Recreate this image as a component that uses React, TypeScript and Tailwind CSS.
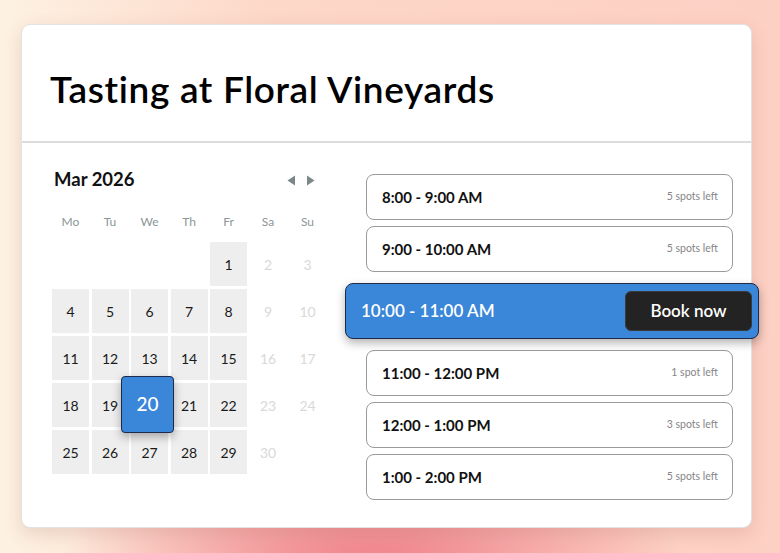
import React from "react";

type Slot = { time: string; spots: string };

const slots: Slot[] = [
  { time: "8:00 - 9:00 AM", spots: "5 spots left" },
  { time: "9:00 - 10:00 AM", spots: "5 spots left" },
  { time: "10:00 - 11:00 AM", spots: "" },
  { time: "11:00 - 12:00 PM", spots: "1 spot left" },
  { time: "12:00 - 1:00 PM", spots: "3 spots left" },
  { time: "1:00 - 2:00 PM", spots: "5 spots left" },
];

const weekdays = ["Mo", "Tu", "We", "Th", "Fr", "Sa", "Su"];

// March 2026 grid, starting on Friday the 1st (as the picture shows)
const days: (number | null)[] = [null, null, null, null, ...Array.from({ length: 30 }, (_, i) => i + 1)];

const Calendar = () => (
  <div className="w-[274px] shrink-0">
    <div className="flex h-[24px] items-center justify-between pl-[2px] pr-[11px]">
      <span className="text-[18.5px] font-bold text-[#111]">Mar 2026</span>
      <div className="flex items-center gap-[10px] text-[#7c8888]">
        <svg width="9" height="11" viewBox="0 0 9 11"><path d="M8 0.5 L0.5 5.5 L8 10.5 Z" fill="currentColor" /></svg>
        <svg width="9" height="11" viewBox="0 0 9 11"><path d="M1 0.5 L8.5 5.5 L1 10.5 Z" fill="currentColor" /></svg>
      </div>
    </div>
    <div className="mt-[21px] grid grid-cols-7 gap-x-[2.5px] text-center text-[12px] text-[#8c9696]">
      {weekdays.map((d) => (
        <span key={d}>{d}</span>
      ))}
    </div>
    <div className="mt-[11px] grid grid-cols-7 gap-x-[2.5px] gap-y-[3px]">
      {days.map((d, i) => {
        if (d === null) return <div key={i} className="h-[44px]" />;
        const weekend = i % 7 >= 5;
        if (weekend)
          return (
            <div key={i} className="flex h-[44px] items-center justify-center text-[14px] text-[#d9d9d9]">
              {d}
            </div>
          );
        if (d === 20)
          return (
            <div key={i} className="relative h-[44px] bg-[#eeeeee]">
              <div className="absolute -bottom-[6px] -left-[10px] -right-[6px] -top-[7px] z-10 flex items-center justify-center rounded-[4px] border border-[#1d2a4a] bg-[#3a86d8] text-[19px] font-medium text-white shadow-[0_4px_10px_rgba(0,0,0,0.3)]">
                20
              </div>
            </div>
          );
        return (
          <div key={i} className="flex h-[44px] items-center justify-center bg-[#eeeeee] text-[14px] text-[#1a1a1a]">
            {d}
          </div>
        );
      })}
    </div>
  </div>
);

const SlotRow = ({ slot }: { slot: Slot }) => (
  <div className="flex h-[46px] items-center justify-between rounded-[8px] border-[1.5px] border-[#9a9a9a] bg-white pl-[15px] pr-[14px]">
    <span className="text-[15px] font-bold text-[#111]">{slot.time}</span>
    <span className="text-[10.5px] text-[#858585]">{slot.spots}</span>
  </div>
);

export default function App() {
  return (
    <div
      className="min-h-[553px] w-full pt-[24px] pl-[21px] [font-family:Lato,'Noto_Sans',sans-serif] bg-[radial-gradient(ellipse_40%_32%_at_48%_105%,#ee7a85_0%,rgba(240,130,140,0.6)_45%,rgba(253,208,196,0)_100%),linear-gradient(90deg,#fdf2e2_0%,#fdd7c8_35%,#fdd0c4_100%)]"
    >
      <div className="w-[731px] h-[504px] rounded-[9px] border border-[#e2e2e2] bg-white shadow-[0_6px_18px_rgba(150,80,70,0.18)]">
        <div className="flex h-[118px] items-center border-b-2 border-[#dcdcdc] pl-[28px] pt-[12px]">
          <h1 className="text-[37px] font-semibold tracking-[0.65px] text-black">Tasting at Floral Vineyards</h1>
        </div>
        <div className="flex pl-[30px] pr-[18px]">
          <div className="pt-[25px]">
            <Calendar />
          </div>
          <div className="ml-[40px] flex flex-1 flex-col pt-[31px]">
            {slots.map((s, i) =>
              i === 2 ? (
                <div
                  key={i}
                  className="relative z-10 -ml-[21px] -mr-[26px] my-[11px] flex h-[56px] items-center justify-between rounded-[8px] border border-[#1d2a4a] bg-[#3a86d8] pl-[15px] pr-[6px] shadow-[0_4px_10px_rgba(0,0,0,0.3)]"
                >
                  <span className="text-[17px] font-semibold text-white">{s.time}</span>
                  <button className="flex h-[40px] w-[127px] items-center justify-center rounded-[6px] border border-[#3a3a3a] bg-[#232323] text-[17px] font-semibold text-white">
                    Book now
                  </button>
                </div>
              ) : (
                <div key={i} className={i === 0 || i === 3 ? "" : "mt-[6px]"}>
                  <SlotRow slot={s} />
                </div>
              )
            )}
          </div>
        </div>
      </div>
    </div>
  );
}
